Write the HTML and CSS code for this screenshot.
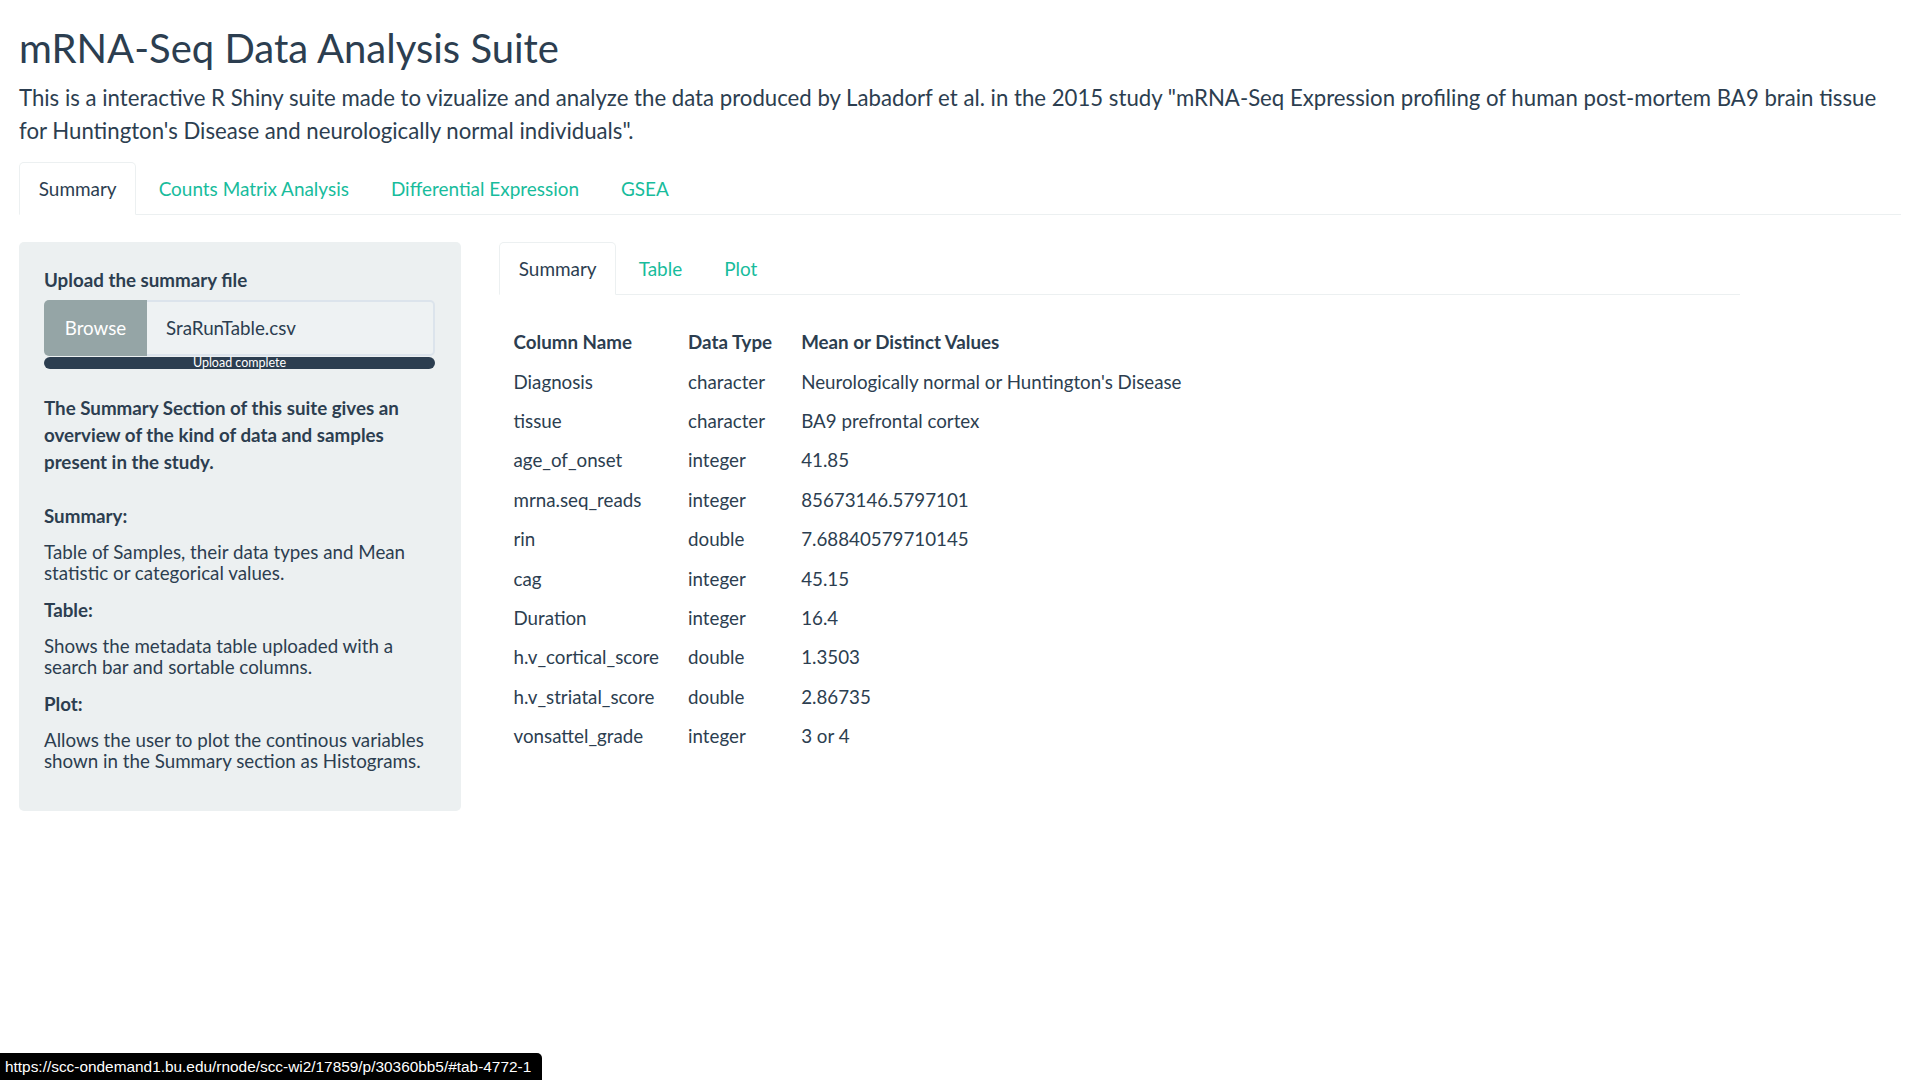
FILE: index.html
```html
<!DOCTYPE html>
<html lang="en">
<head>
<meta charset="utf-8">
<title>mRNA-Seq Data Analysis Suite</title>
<link rel="stylesheet" href="styles.css">
</head>
<body>
<div class="page">
  <h2 class="title">mRNA-Seq Data Analysis Suite</h2>
  <p class="intro">This is a interactive R Shiny suite made to vizualize and analyze the data produced by Labadorf et al. in the 2015 study "mRNA-Seq Expression profiling of human post-mortem BA9 brain tissue for Huntington's Disease and neurologically normal individuals".</p>
  <ul class="tabs">
    <li class="tab active"><a>Summary</a></li>
    <li class="tab"><a>Counts Matrix Analysis</a></li>
    <li class="tab"><a>Differential Expression</a></li>
    <li class="tab"><a>GSEA</a></li>
  </ul>
  <div class="layout">
    <aside class="well">
      <label class="field-label">Upload the summary file</label>
      <div class="input-group">
        <span class="browse">Browse</span>
        <span class="filename">SraRunTable.csv</span>
      </div>
      <div class="progress"><div class="progress-bar">Upload complete</div></div>
      <p class="lead-bold">The Summary Section of this suite gives an overview of the kind of data and samples present in the study.</p>
      <h5 class="sec-head">Summary:</h5>
      <p class="sec-desc">Table of Samples, their data types and Mean statistic or categorical values.</p>
      <h5 class="sec-head">Table:</h5>
      <p class="sec-desc">Shows the metadata table uploaded with a search bar and sortable columns.</p>
      <h5 class="sec-head">Plot:</h5>
      <p class="sec-desc">Allows the user to plot the continous variables shown in the Summary section as Histograms.</p>
    </aside>
    <main class="main">
      <ul class="tabs">
        <li class="tab active"><a>Summary</a></li>
        <li class="tab"><a>Table</a></li>
        <li class="tab"><a>Plot</a></li>
      </ul>
      <table class="summary-table">
        <thead>
          <tr><th>Column Name</th><th>Data Type</th><th>Mean or Distinct Values</th></tr>
        </thead>
        <tbody>
          <tr><td>Diagnosis</td><td>character</td><td>Neurologically normal or Huntington's Disease</td></tr>
          <tr><td>tissue</td><td>character</td><td>BA9 prefrontal cortex</td></tr>
          <tr><td>age_of_onset</td><td>integer</td><td>41.85</td></tr>
          <tr><td>mrna.seq_reads</td><td>integer</td><td>85673146.5797101</td></tr>
          <tr><td>rin</td><td>double</td><td>7.68840579710145</td></tr>
          <tr><td>cag</td><td>integer</td><td>45.15</td></tr>
          <tr><td>Duration</td><td>integer</td><td>16.4</td></tr>
          <tr><td>h.v_cortical_score</td><td>double</td><td>1.3503</td></tr>
          <tr><td>h.v_striatal_score</td><td>double</td><td>2.86735</td></tr>
          <tr><td>vonsattel_grade</td><td>integer</td><td>3 or 4</td></tr>
        </tbody>
      </table>
    </main>
  </div>
</div>
<div class="status">https://scc-ondemand1.bu.edu/rnode/scc-wi2/17859/p/30360bb5/#tab-4772-1</div>
</body>
</html>
```
FILE: styles.css
```css
* { box-sizing: border-box; }

html, body {
  margin: 0;
  padding: 0;
  background: #ffffff;
}

body {
  font-family: Lato, "Open Sans", sans-serif;
  font-size: 18.75px;
  line-height: 26.8px;
  color: #2c3e50;
}

.page {
  padding: 0 19px;
}

.title {
  font-size: 40px;
  font-weight: 400;
  line-height: 44px;
  margin: 26px 0 11px 0;
}

.intro {
  font-size: 22.2px;
  line-height: 33px;
  margin: 0 0 15px 0;
}

.tabs {
  list-style: none;
  margin: 0;
  padding: 0;
  display: flex;
  border-bottom: 1px solid #ecf0f1;
}

.tab {
  margin-bottom: -1px;
  margin-right: 2.5px;
}

.tab a {
  display: block;
  padding: 12.5px 18.75px;
  font-size: 18.95px;
  line-height: 26px;
  border: 1px solid transparent;
  border-radius: 5px 5px 0 0;
  color: #18bc9c;
}

.tab.active a {
  color: #2c3e50;
  background: #ffffff;
  border-color: #ecf0f1 #ecf0f1 transparent #ecf0f1;
}

.layout {
  display: grid;
  grid-template-columns: 442px 1241px;
  column-gap: 38px;
  align-items: start;
  margin-top: 27px;
}

.well {
  background: #ecf0f1;
  border: 1px solid transparent;
  border-radius: 5px;
  padding: 24px;
}

.field-label {
  display: block;
  font-weight: 700;
  margin-bottom: 6.5px;
}

.input-group {
  display: flex;
  height: 56px;
}

.browse {
  width: 103px;
  flex: none;
  background: #95a5a6;
  color: #ffffff;
  border-radius: 5px 0 0 5px;
  display: flex;
  align-items: center;
  justify-content: center;
}

.filename {
  flex: 1;
  display: flex;
  align-items: center;
  padding: 0 19px;
  margin-right: 1px;
  border: 2px solid #dce4ec;
  border-left: none;
  border-radius: 0 5px 5px 0;
  background: #eef2f3;
}

.progress {
  margin-top: 1px;
  height: 12px;
  border-radius: 6px;
  background: #2c3e50;
  margin-right: 1px;
}

.progress-bar {
  height: 12px;
  text-align: center;
  color: #ffffff;
  font-size: 12.5px;
  line-height: 12px;
}

.lead-bold {
  font-weight: 700;
  line-height: 27px;
  margin: 25px 0 30px 0;
}

.sec-head {
  font-size: 18.75px;
  font-weight: 700;
  line-height: 21px;
  margin: 16.5px 0 14.5px 0;
}

.sec-desc {
  line-height: 21px;
  margin: 0 0 15px 0;
}

.summary-table {
  border-collapse: collapse;
  margin-top: 28px;
}

.summary-table th,
.summary-table td {
  text-align: left;
  padding: 6.3px 14.5px;
  line-height: 26.8px;
  white-space: nowrap;
}

.summary-table th {
  font-weight: 700;
}

.status {
  position: fixed;
  left: 0;
  bottom: 0;
  height: 27px;
  padding: 0 11px 0 5px;
  background: #000000;
  color: #ffffff;
  font-family: "Liberation Sans", Arial, sans-serif;
  font-size: 15.4px;
  line-height: 27px;
  border-top-right-radius: 5px;
}
```
